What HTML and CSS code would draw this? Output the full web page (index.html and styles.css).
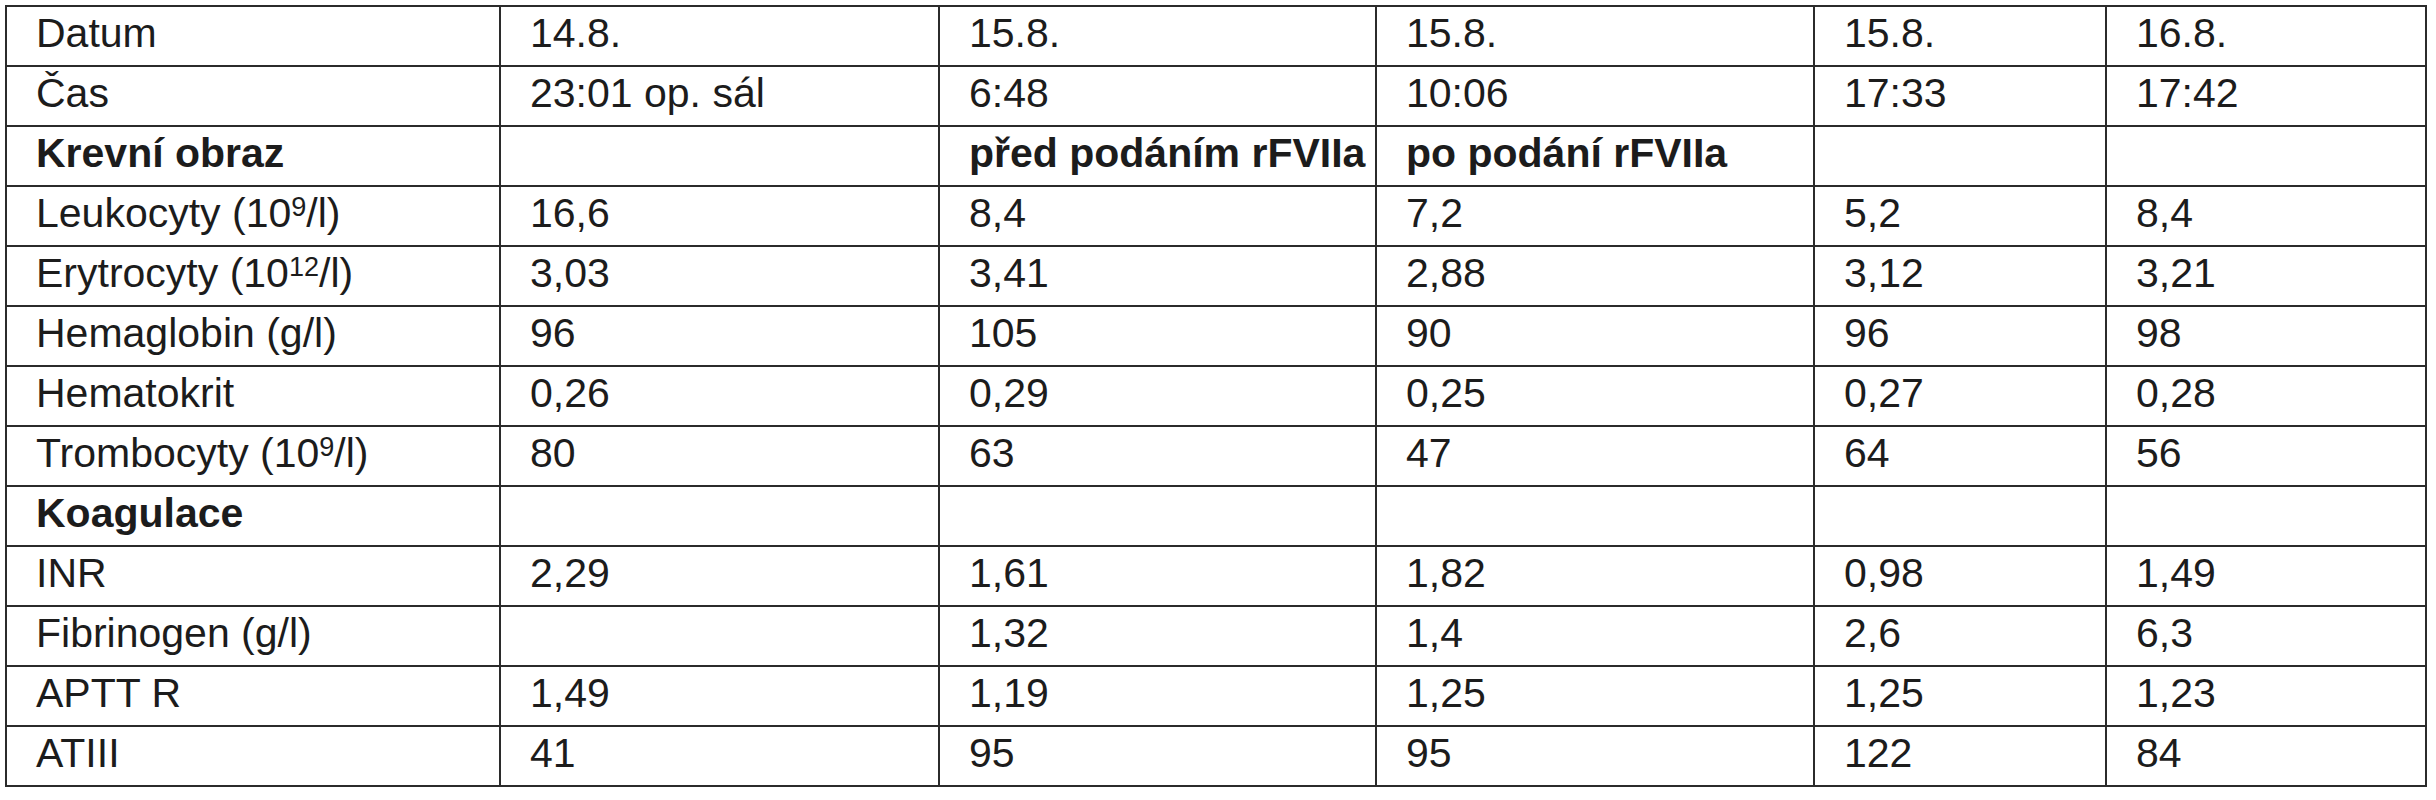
FILE: index.html
```html
<!DOCTYPE html>
<html lang="cs">
<head>
<meta charset="utf-8">
<title>Tabulka</title>
<link rel="stylesheet" href="styles.css">
</head>
<body>
<table class="lab">
  <colgroup>
    <col class="c1"><col class="c2"><col class="c3"><col class="c4"><col class="c5"><col class="c6">
  </colgroup>
  <tbody>
    <tr><td>Datum</td><td>14.8.</td><td>15.8.</td><td>15.8.</td><td>15.8.</td><td>16.8.</td></tr>
    <tr><td>Čas</td><td>23:01 op. sál</td><td>6:48</td><td>10:06</td><td>17:33</td><td>17:42</td></tr>
    <tr class="bold"><td>Krevní obraz</td><td></td><td>před podáním rFVIIa</td><td>po podání rFVIIa</td><td></td><td></td></tr>
    <tr><td>Leukocyty (10<sup>9</sup>/l)</td><td>16,6</td><td>8,4</td><td>7,2</td><td>5,2</td><td>8,4</td></tr>
    <tr><td>Erytrocyty (10<sup>12</sup>/l)</td><td>3,03</td><td>3,41</td><td>2,88</td><td>3,12</td><td>3,21</td></tr>
    <tr><td>Hemaglobin (g/l)</td><td>96</td><td>105</td><td>90</td><td>96</td><td>98</td></tr>
    <tr><td>Hematokrit</td><td>0,26</td><td>0,29</td><td>0,25</td><td>0,27</td><td>0,28</td></tr>
    <tr><td>Trombocyty (10<sup>9</sup>/l)</td><td>80</td><td>63</td><td>47</td><td>64</td><td>56</td></tr>
    <tr class="bold"><td>Koagulace</td><td></td><td></td><td></td><td></td><td></td></tr>
    <tr><td>INR</td><td>2,29</td><td>1,61</td><td>1,82</td><td>0,98</td><td>1,49</td></tr>
    <tr><td>Fibrinogen (g/l)</td><td></td><td>1,32</td><td>1,4</td><td>2,6</td><td>6,3</td></tr>
    <tr><td>APTT R</td><td>1,49</td><td>1,19</td><td>1,25</td><td>1,25</td><td>1,23</td></tr>
    <tr><td>ATIII</td><td>41</td><td>95</td><td>95</td><td>122</td><td>84</td></tr>
  </tbody>
</table>
</body>
</html>
```
FILE: styles.css
```css
html, body {
  margin: 0;
  padding: 0;
  background: #ffffff;
}

body {
  padding: 5px 0 0 5px;
  font-family: "Liberation Sans", Arial, sans-serif;
  color: #1c1c1c;
}

.lab {
  border-collapse: collapse;
  table-layout: fixed;
  width: 2420px;
}

.c1 { width: 494px; }
.c2 { width: 439px; }
.c3 { width: 437px; }
.c4 { width: 438px; }
.c5 { width: 292px; }
.c6 { width: 320px; }

.lab td {
  border: 2px solid #2b2b2b;
  height: 56px;
  padding: 3px 4px 0 29px;
  box-sizing: border-box;
  vertical-align: top;
  font-size: 41px;
  line-height: 47px;
  white-space: nowrap;
  overflow: hidden;
}

.lab tr {
  height: 60px;
}

.lab .bold td {
  font-weight: bold;
}

.lab sup {
  font-size: 0.66em;
  line-height: 0;
  vertical-align: 0.42em;
}
```
